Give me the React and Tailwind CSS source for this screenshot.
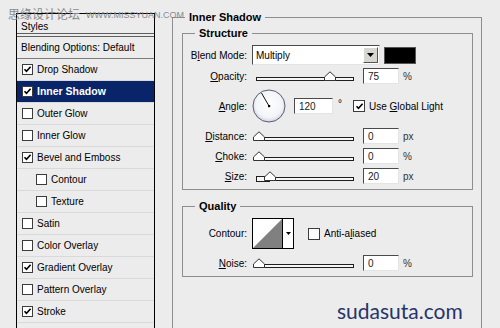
import React from 'react'

const Check = ({ on, size = 11 }) => (
  <span className="flex items-center justify-center bg-white border border-[#3c3c3c] shrink-0" style={{ width: size, height: size }}>
    {on && (
      <svg width="9" height="9" viewBox="0 0 9 9">
        <path d="M1.5 4.2 L3.5 6.3 L7.6 1.8" fill="none" stroke="#000" strokeWidth="1.6" />
      </svg>
    )}
  </span>
)

const styleRows = [
  { label: 'Drop Shadow', on: true },
  { label: 'Inner Shadow', on: true, active: true },
  { label: 'Outer Glow' },
  { label: 'Inner Glow' },
  { label: 'Bevel and Emboss', on: true },
  { label: 'Contour', indent: true },
  { label: 'Texture', indent: true },
  { label: 'Satin' },
  { label: 'Color Overlay' },
  { label: 'Gradient Overlay', on: true },
  { label: 'Pattern Overlay' },
  { label: 'Stroke', on: true },
]

function StylesList() {
  return (
    <div className="ml-[16px] mt-[13px] w-[139px] h-[330px] shrink-0 border-l border-t border-r border-black bg-[#ececec]">
      <div className="h-[19px] pl-[4px] pt-[3px] leading-[19px]">Styles</div>
      <div className="h-[4px] border-y border-[#5e5e5e]" />
      <div className="h-[22px] pl-[4px] flex items-center border-b border-[#7c7c7c]">Blending Options: Default</div>
      {styleRows.map((r) => (
        <div
          key={r.label}
          className={`h-[22px] flex items-center gap-[4px] border-b border-[#d9d9d9] ${r.indent ? 'pl-[19px]' : 'pl-[5px]'} ${r.active ? 'bg-[#0a246a] text-white font-bold text-[10.5px]' : ''}`}
        >
          <Check on={r.on} />
          <span>{r.label}</span>
        </div>
      ))}
    </div>
  )
}

const U = ({ children }) => <span className="underline underline-offset-[1px]">{children}</span>

function Label({ children }) {
  return <div className="w-[64px] shrink-0 text-right">{children}</div>
}

function Field({ value, w = 36 }) {
  return (
    <div
      className="h-[16px] bg-white border border-t-[#4a4a4a] border-l-[#4a4a4a] border-b-[#e4e4e4] border-r-[#e4e4e4] pl-[4px] leading-[16px] text-[#222]"
      style={{ width: w }}
    >
      {value}
    </div>
  )
}

function Slider({ pos, fill = false }) {
  return (
    <div className="relative w-[98px] h-[14px] ml-[9px] shrink-0">
      <div className="absolute left-0 right-0 top-[8px] h-[4px] border border-[#1e1e1e] bg-[#f6f6f6]" />
      {fill && <div className="absolute left-0 top-[7px] h-[6px] border border-[#1e1e1e] bg-[#f6f6f6]" style={{ width: pos }} />}
      <svg className="absolute top-[2px]" style={{ left: pos - 6 }} width="12" height="10" viewBox="0 0 12 10">
        <path d="M0.5 9.5 L0.5 6 L6 0.8 L11.5 6 L11.5 9.5 Z" fill="#fff" stroke="#333" />
      </svg>
    </div>
  )
}

function SliderRow({ label, pos, value, unit, fill }) {
  return (
    <div className="h-[20px] flex items-center">
      <Label>{label}</Label>
      <Slider pos={pos} fill={fill} />
      <div className="ml-[9px]">
        <Field value={value} />
      </div>
      <span className="ml-[4px] text-[10px] text-[#333]">{unit}</span>
    </div>
  )
}

function Group({ title, className = '', children }) {
  return (
    <div className={`relative border border-[#8e8e8e] ${className}`}>
      <span className="absolute -top-[7px] left-[12px] px-[4px] bg-[#ececec] font-bold text-[11px] leading-[13px]">{title}</span>
      {children}
    </div>
  )
}

function Dial() {
  return (
    <svg width="34" height="34" viewBox="0 0 34 34" className="shrink-0">
      <defs>
        <radialGradient id="dg" cx="50%" cy="45%" r="55%">
          <stop offset="0%" stopColor="#ffffff" />
          <stop offset="75%" stopColor="#f3f4f8" />
          <stop offset="100%" stopColor="#cfd3e0" />
        </radialGradient>
      </defs>
      <circle cx="17" cy="17" r="16" fill="url(#dg)" stroke="#5a5f70" strokeWidth="1" />
      <line x1="17" y1="17" x2="9.5" y2="4" stroke="#111" strokeWidth="1" />
      <rect x="16" y="16" width="2.2" height="2.2" fill="#000" />
    </svg>
  )
}

export default function App() {
  return (
    <div className="relative w-[500px] h-[328px] overflow-hidden bg-[#ececec] flex items-start font-['Liberation_Sans',Arial,sans-serif] text-[10px] text-black">
      <StylesList />

      <Group title="Inner Shadow" className="ml-[17px] mt-[17px] w-[310px] h-[330px] shrink-0 pl-[9px] pr-[8px] pt-[15px]">
        <Group title="Structure" className="h-[157px] pt-[11px]">
          <div className="h-[20px] flex items-center">
            <Label>B<U>l</U>end Mode:</Label>
            <div className="ml-[5px] w-[128px] h-[20px] bg-white border border-t-[#4a4a4a] border-l-[#4a4a4a] border-b-[#e4e4e4] border-r-[#e4e4e4] flex items-center justify-between pl-[3px] pr-[1px]">
              <span>Multiply</span>
              <span className="w-[15px] h-[16px] bg-[#d8d6d0] border border-t-white border-l-white border-b-[#555] border-r-[#555] flex items-center justify-center">
                <svg width="7" height="4" viewBox="0 0 7 4"><path d="M0 0 H7 L3.5 4 Z" fill="#000" /></svg>
              </span>
            </div>
            <div className="ml-[4px] w-[32px] h-[17px] bg-black border border-[#555]" />
          </div>

          <div className="mt-[1px]">
            <SliderRow label={<><U>O</U>pacity:</>} pos={74} value="75" unit="%" />
          </div>

          <div className="mt-[3px] h-[34px] flex items-center">
            <Label><U>A</U>ngle:</Label>
            <div className="ml-[5px]"><Dial /></div>
            <div className="ml-[8px]"><Field value="120" w={39} /></div>
            <span className="ml-[5px] -mt-[6px] text-[10px]">°</span>
            <div className="ml-[11px] flex items-center gap-[4px]">
              <Check on size={12} />
              <span>Use <U>G</U>lobal Light</span>
            </div>
          </div>

          <div className="mt-[3px]">
            <SliderRow label={<><U>D</U>istance:</>} pos={3} value="0" unit="px" />
          </div>
          <SliderRow label={<><U>C</U>hoke:</>} pos={3} value="0" unit="%" />
          <SliderRow label={<><U>S</U>ize:</>} pos={14} value="20" unit="px" fill />
        </Group>

        <Group title="Quality" className="mt-[16px] h-[71px] pt-[11px]">
          <div className="h-[31px] flex items-center">
            <Label>Contour:</Label>
            <div className="ml-[5px] w-[42px] h-[31px] bg-white border border-black flex">
              <svg width="29" height="29" viewBox="0 0 29 29" className="shrink-0">
                <path d="M0 29 L29 0 L29 29 Z" fill="#808080" />
              </svg>
              <div className="flex-1 border-l border-black flex items-center justify-center">
                <svg width="5" height="3" viewBox="0 0 5 3"><path d="M0 0 H5 L2.5 3 Z" fill="#000" /></svg>
              </div>
            </div>
            <div className="ml-[14px] flex items-center gap-[4px]">
              <Check size={12} />
              <span>Anti-a<U>l</U>iased</span>
            </div>
          </div>
          <div className="mt-[4px]">
            <SliderRow label={<><U>N</U>oise:</>} pos={3} value="0" unit="%" />
          </div>
        </Group>
      </Group>

      <div className="absolute left-[8px] top-[6px] flex items-end gap-[6px] text-[#8a8a8a] pointer-events-none">
        <span className="text-[12px] leading-[15px] font-['Noto_Sans_CJK_SC',sans-serif]">思缘设计论坛</span>
        <span className="text-[9px] leading-[12px] font-['Liberation_Sans',sans-serif]">WWW.MISSYUAN.COM</span>
      </div>

      <div className="absolute left-[337px] top-[295px] text-[21px] text-[#26356a] font-['Lato',sans-serif]">sudasuta.com</div>
    </div>
  )
}
